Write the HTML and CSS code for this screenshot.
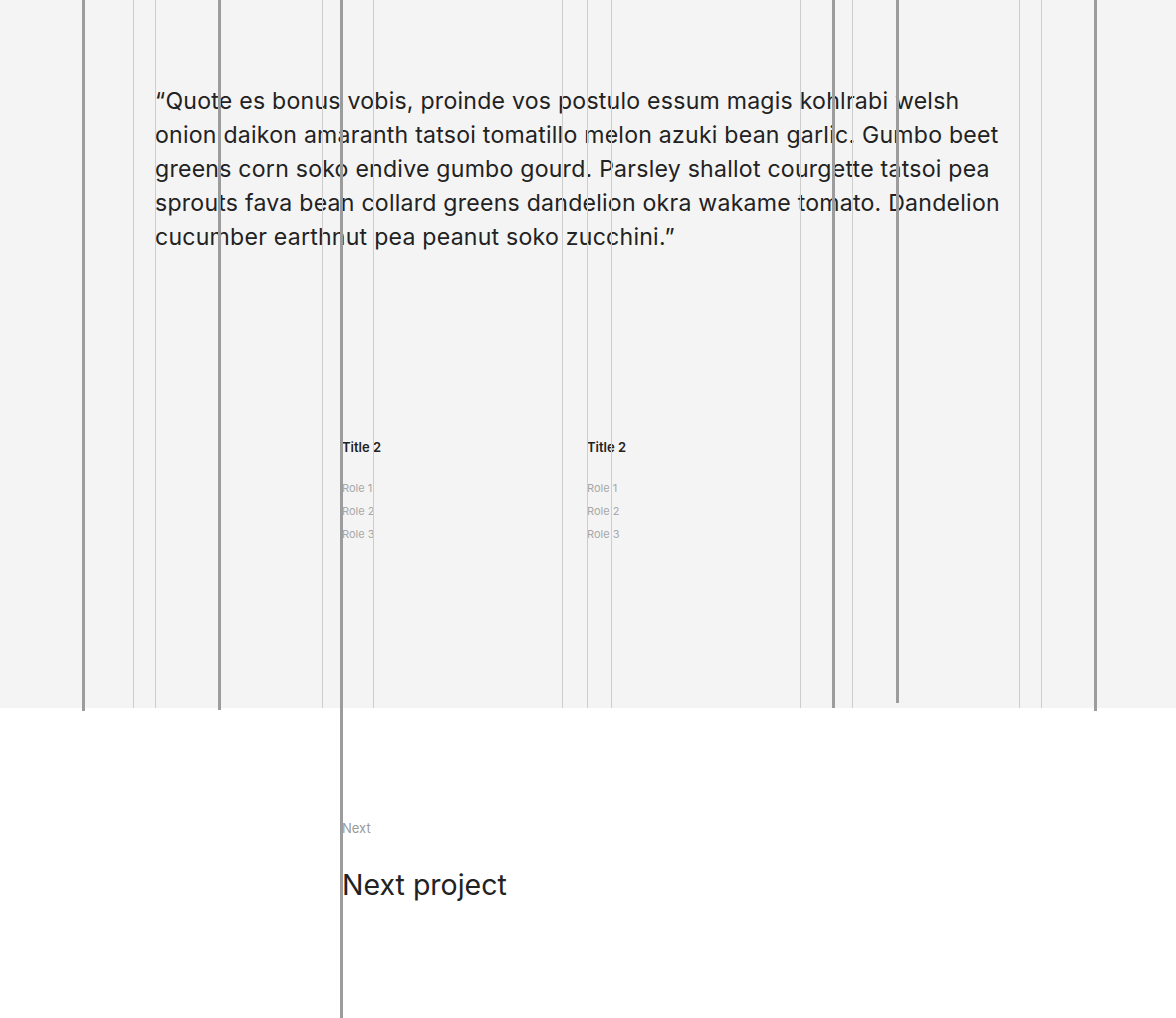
FILE: index.html
```html
<!DOCTYPE html>
<html lang="en">
<head>
<meta charset="utf-8">
<title>Project</title>
<link rel="stylesheet" href="styles.css">
</head>
<body>
<main class="page">
  <section class="story">
    <blockquote class="quote">“Quote es bonus vobis, proinde vos postulo essum magis kohlrabi welsh onion daikon amaranth tatsoi tomatillo melon azuki bean garlic. Gumbo beet greens corn soko endive gumbo gourd. Parsley shallot courgette tatsoi pea sprouts fava bean collard greens dandelion okra wakame tomato. Dandelion cucumber earthnut pea peanut soko zucchini.”</blockquote>
    <div class="credits">
      <div class="credit">
        <h3 class="credit-title">Title 2</h3>
        <ul class="roles">
          <li>Role 1</li>
          <li>Role 2</li>
          <li>Role 3</li>
        </ul>
      </div>
      <div class="credit">
        <h3 class="credit-title">Title 2</h3>
        <ul class="roles">
          <li>Role 1</li>
          <li>Role 2</li>
          <li>Role 3</li>
        </ul>
      </div>
    </div>
  </section>
  <section class="next">
    <p class="next-label">Next</p>
    <p class="next-title">Next project</p>
  </section>

  <div class="guides" aria-hidden="true">
    <span class="guide thick g1"></span>
    <span class="guide thin g2"></span>
    <span class="guide thin g3"></span>
    <span class="guide thick g4"></span>
    <span class="guide thin g5"></span>
    <span class="guide thick g6"></span>
    <span class="guide thin g7"></span>
    <span class="guide thin g8"></span>
    <span class="guide thin g9"></span>
    <span class="guide thin g10"></span>
    <span class="guide thin g11"></span>
    <span class="guide thick g12"></span>
    <span class="guide thin g13"></span>
    <span class="guide thick g14"></span>
    <span class="guide thin g15"></span>
    <span class="guide thin g16"></span>
    <span class="guide thick g17"></span>
  </div>
</main>
</body>
</html>
```

FILE: styles.css
```css
html, body {
  margin: 0;
  padding: 0;
  background: #ffffff;
}

body {
  font-family: Inter, "Liberation Sans", Arial, sans-serif;
  color: #1c1c1c;
}

.page {
  position: relative;
  width: 1176px;
  height: 1018px;
  overflow: hidden;
}

.story {
  background: #f4f4f4;
  height: 708px;
  box-sizing: border-box;
  padding-top: 84px;
}

.quote {
  margin: 0 0 0 155px;
  width: 860px;
  font-size: 23.1px;
  letter-spacing: 0.23px;
  line-height: 34px;
  color: #222222;
}

.credits {
  display: flex;
  margin: 185px 0 0 342px;
}

.credit {
  width: 245px;
}

.credit-title {
  margin: 0;
  font-size: 13px;
  line-height: 16px;
  font-weight: 600;
  color: #222;
}

.roles {
  list-style: none;
  margin: 22px 0 0;
  padding: 0;
  font-size: 11px;
  line-height: 23px;
  color: #a8a8a8;
}

.next {
  padding: 112px 0 0 342px;
}

.next-label {
  margin: 0;
  font-size: 13px;
  line-height: 16px;
  color: #9a9a9a;
}

.next-title {
  margin: 32px 0 0;
  font-size: 28.5px;
  line-height: 34px;
  color: #222;
}

.guides {
  position: absolute;
  inset: 0;
  pointer-events: none;
}

.guide {
  position: absolute;
  top: 0;
  height: 708px;
}

.thick {
  width: 3px;
  background: #9c9c9c;
}

.thin {
  width: 1px;
  background: #cdcdcd;
}

.g1 { left: 82px; height: 711px; }
.g2 { left: 133px; }
.g3 { left: 155px; }
.g4 { left: 218px; height: 710px; }
.g5 { left: 322px; }
.g6 { left: 340px; height: 1018px; }
.g7 { left: 373px; }
.g8 { left: 562px; }
.g9 { left: 587px; }
.g10 { left: 611px; }
.g11 { left: 800px; }
.g12 { left: 832px; }
.g13 { left: 852px; }
.g14 { left: 896px; height: 703px; }
.g15 { left: 1019px; }
.g16 { left: 1041px; }
.g17 { left: 1094px; height: 711px; }
```
